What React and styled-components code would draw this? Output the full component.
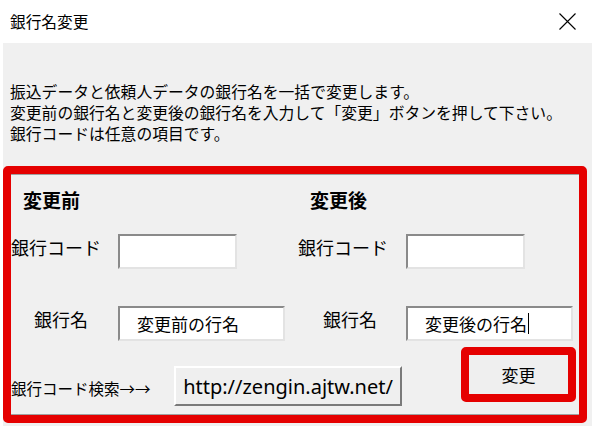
import React from "react"
import styled, { createGlobalStyle } from "styled-components"

const GlobalStyle = createGlobalStyle`
  html, body {
    margin: 0;
    padding: 0;
    background: #fff;
  }
  body {
    font-family: "Noto Sans CJK JP", "Noto Sans", sans-serif;
    color: #000;
  }
`

const Window = styled.div`
  width: 592px;
  height: 426px;
  display: flex;
  flex-direction: column;
  background: #fff;
  overflow: hidden;
`

const TitleBar = styled.div`
  height: 43px;
  flex: none;
  display: flex;
  align-items: center;
  justify-content: space-between;
  padding: 0 16px 0 10px;
  font-size: 15.7px;
`

const CloseButton = styled.div`
  display: flex;
  align-items: center;
  margin-top: -1px;
`

const Body = styled.div`
  flex: 1;
  margin-left: 3px;
  background: #f0f0f0;
  padding-top: 38px;
  display: flex;
  flex-direction: column;
`

const Description = styled.div`
  padding-left: 7px;
  font-size: 15.8px;
  line-height: 21px;
  white-space: nowrap;
`

const Frame = styled.div`
  box-sizing: border-box;
  margin-top: 22px;
  width: 584px;
  height: 257px;
  border: 8px solid #e50000;
  border-radius: 5px;
  box-shadow: inset 0 1px 0 #a0a0a0, inset 0 -1px 0 #a0a0a0;
  padding-top: 13px;
  display: flex;
  flex-direction: column;
`

const Sides = styled.div`
  display: grid;
  grid-template-columns: 287px 1fr;
`

const Side = styled.div`
  display: flex;
  flex-direction: column;
`

const Heading = styled.div`
  padding-left: 12px;
  font-size: 19px;
  font-weight: bold;
  line-height: 26px;
`

const Row = styled.div`
  display: flex;
  align-items: flex-start;
  margin-top: ${(p) => p.$gap}px;
`

const Label = styled.div`
  box-sizing: border-box;
  width: ${(p) => p.$width}px;
  padding-left: ${(p) => p.$indent || 0}px;
  font-size: 18px;
  line-height: 26px;
  white-space: nowrap;
`

const TextBox = styled.div`
  box-sizing: border-box;
  width: ${(p) => p.$width}px;
  height: 35px;
  background: #fff;
  border-top: 2px solid #8a8a8a;
  border-left: 2px solid #8a8a8a;
  border-bottom: 2px solid #e3e3e3;
  border-right: 2px solid #e3e3e3;
  padding-left: 17px;
  display: flex;
  align-items: center;
  font-size: 17px;
  white-space: nowrap;
`

const Caret = styled.span`
  display: inline-block;
  width: 1px;
  height: 21px;
  margin-left: 1px;
  background: #000;
`

const ActionRow = styled.div`
  display: flex;
  align-items: flex-start;
  margin-top: 6px;
`

const SearchLabel = styled.div`
  width: 163px;
  margin-top: 31px;
  font-size: 15.5px;
  line-height: 20px;
  white-space: nowrap;
`

const LinkButton = styled.button`
  box-sizing: border-box;
  width: 228px;
  height: 40px;
  margin-top: 19px;
  padding: 0;
  background: #efefef;
  border-top: 2px solid #fff;
  border-left: 2px solid #fff;
  border-bottom: 2px solid #7a7a7a;
  border-right: 2px solid #7a7a7a;
  font-family: "Noto Sans", "Liberation Sans", sans-serif;
  font-size: 20px;
  color: #000;
`

const ChangeButton = styled.button`
  box-sizing: border-box;
  width: 115px;
  height: 55px;
  margin-left: auto;
  margin-right: 3px;
  padding: 0;
  background: #efefef;
  border: 8px solid #e50000;
  border-radius: 5px;
  font-family: "Noto Sans CJK JP", sans-serif;
  font-size: 17px;
  color: #000;
`

const fields = [
  { heading: "変更前", codeIndent: 0, nameIndent: 23, labelWidth: 107, name: "変更前の行名", caret: false },
  { heading: "変更後", codeIndent: 0, nameIndent: 25, labelWidth: 108, name: "変更後の行名", caret: true },
]

export default function App() {
  return (
    <>
      <GlobalStyle />
      <Window>
        <TitleBar>
          <span>銀行名変更</span>
          <CloseButton>
            <svg width="17" height="17" viewBox="0 0 17 17">
              <path d="M0.5 0.5 L16.5 16.5 M16.5 0.5 L0.5 16.5" stroke="#000" strokeWidth="1.1" fill="none" />
            </svg>
          </CloseButton>
        </TitleBar>
        <Body>
          <Description>
            <div>振込データと依頼人データの銀行名を一括で変更します。</div>
            <div>変更前の銀行名と変更後の銀行名を入力して「変更」ボタンを押して下さい。</div>
            <div>銀行コードは任意の項目です。</div>
          </Description>
          <Frame>
            <Sides>
              {fields.map((f) => (
                <Side key={f.heading}>
                  <Heading>{f.heading}</Heading>
                  <Row $gap={21}>
                    <Label $width={f.labelWidth} $indent={f.codeIndent}>銀行コード</Label>
                    <TextBox $width={119} />
                  </Row>
                  <Row $gap={37}>
                    <Label $width={f.labelWidth} $indent={f.nameIndent}>銀行名</Label>
                    <TextBox $width={167}>
                      {f.name}
                      {f.caret && <Caret />}
                    </TextBox>
                  </Row>
                </Side>
              ))}
            </Sides>
            <ActionRow>
              <SearchLabel>銀行コード検索→→</SearchLabel>
              <LinkButton>http://zengin.ajtw.net/</LinkButton>
              <ChangeButton>変更</ChangeButton>
            </ActionRow>
          </Frame>
        </Body>
      </Window>
    </>
  )
}
